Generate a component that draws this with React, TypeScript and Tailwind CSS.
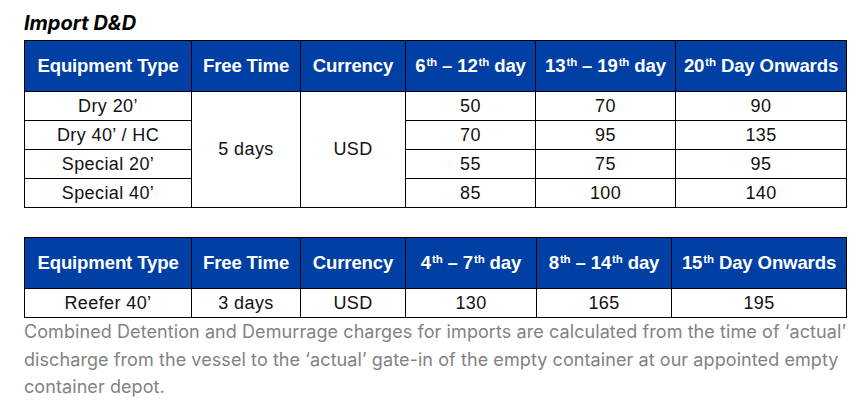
import React from "react";

const sup = (s: string) => <span className="text-[0.62em] relative top-[-0.5em] leading-none ml-[1px]">{s}</span>;

const th = "border border-black bg-[#003fa3] text-white font-bold text-[18.6px] tracking-[-0.15px] text-center align-middle p-0 h-[51px] whitespace-nowrap";
const td = "border border-black text-[18px] tracking-[0.4px] text-center align-middle p-0 h-[29px] text-[#111]";

export default function App() {
  return (
    <div className="w-[863px] h-[404px] bg-white overflow-hidden pl-[24px] pt-[11px]" style={{ fontFamily: '"Liberation Sans", Arial, sans-serif' }}>
      <div className="text-[20px] font-bold italic leading-[24px] text-black mb-[5px]" style={{ fontFamily: 'Inter, "Liberation Sans", sans-serif' }}>
        Import D&amp;D
      </div>
      <table className="border-collapse table-fixed w-[822px]">
        <colgroup>
          <col className="w-[167px]" />
          <col className="w-[109px]" />
          <col className="w-[105px]" />
          <col className="w-[130px]" />
          <col className="w-[140px]" />
          <col className="w-[171px]" />
        </colgroup>
        <thead>
          <tr>
            <th className={th}>Equipment Type</th>
            <th className={th}>Free Time</th>
            <th className={th}>Currency</th>
            <th className={th}>6{sup("th")} – 12{sup("th")} day</th>
            <th className={th}>13{sup("th")} – 19{sup("th")} day</th>
            <th className={th}>20{sup("th")} Day Onwards</th>
          </tr>
        </thead>
        <tbody>
          <tr>
            <td className={td}>Dry 20’</td>
            <td className={td} rowSpan={4}>5 days</td>
            <td className={td} rowSpan={4}>USD</td>
            <td className={td}>50</td>
            <td className={td}>70</td>
            <td className={td}>90</td>
          </tr>
          <tr>
            <td className={td}>Dry 40’ / HC</td>
            <td className={td}>70</td>
            <td className={td}>95</td>
            <td className={td}>135</td>
          </tr>
          <tr>
            <td className={td}>Special 20’</td>
            <td className={td}>55</td>
            <td className={td}>75</td>
            <td className={td}>95</td>
          </tr>
          <tr>
            <td className={td}>Special 40’</td>
            <td className={td}>85</td>
            <td className={td}>100</td>
            <td className={td}>140</td>
          </tr>
        </tbody>
      </table>
      <table className="border-collapse table-fixed w-[822px] mt-[29px]">
        <colgroup>
          <col className="w-[167px]" />
          <col className="w-[109px]" />
          <col className="w-[105px]" />
          <col className="w-[131px]" />
          <col className="w-[135px]" />
          <col className="w-[175px]" />
        </colgroup>
        <thead>
          <tr>
            <th className={th}>Equipment Type</th>
            <th className={th}>Free Time</th>
            <th className={th}>Currency</th>
            <th className={th}>4{sup("th")} – 7{sup("th")} day</th>
            <th className={th}>8{sup("th")} – 14{sup("th")} day</th>
            <th className={th}>15{sup("th")} Day Onwards</th>
          </tr>
        </thead>
        <tbody>
          <tr>
            <td className={td}>Reefer 40’</td>
            <td className={td}>3 days</td>
            <td className={td}>USD</td>
            <td className={td}>130</td>
            <td className={td}>165</td>
            <td className={td}>195</td>
          </tr>
        </tbody>
      </table>
      <p className="text-[18px] leading-[27.7px] tracking-[0.08px] text-[#828282] whitespace-nowrap mt-[0px]" style={{ fontFamily: 'Inter, "Liberation Sans", sans-serif' }}>
        Combined Detention and Demurrage charges for imports are calculated from the time of ‘actual’
        <br />
        discharge from the vessel to the ‘actual’ gate-in of the empty container at our appointed empty
        <br />
        container depot.
      </p>
    </div>
  );
}
